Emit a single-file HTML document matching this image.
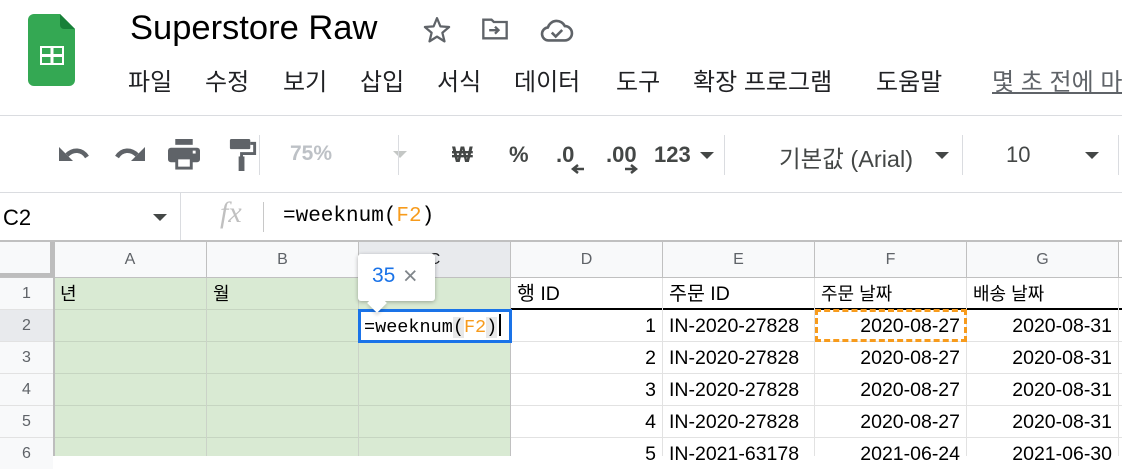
<!DOCTYPE html>
<html><head><meta charset="utf-8"><style>
*{margin:0;padding:0;box-sizing:border-box}
body{width:1122px;height:456px;overflow:hidden;background:#fff;font-family:"Liberation Sans","Noto Sans CJK KR",sans-serif;position:relative;color:#202124}
.a{position:absolute;white-space:nowrap}
.tb{color:#444746;font-size:22px;font-family:"Liberation Sans","Noto Sans CJK KR",sans-serif}
.sep{position:absolute;width:1px;background:#dadce0}
.vl{position:absolute;width:1px;background:#c0c0c0}
.hl{position:absolute;height:1px;background:#e2e2e2}
.ch{position:absolute;top:242px;height:35px;line-height:35px;text-align:center;font-size:16px;color:#5f6368;background:#f8f9fa}
.rh{position:absolute;left:0;width:53px;text-align:center;font-size:16px;color:#5f6368;background:#f8f9fa}
.c{position:absolute;font-size:19.5px;color:#000;height:31px;line-height:32px;padding:0 6px;overflow:hidden}
.r{text-align:right}
</style></head><body>
<svg class="a" style="left:28px;top:14px" width="48" height="72" viewBox="0 0 48 72">
<path d="M6 0H32L47 15V66a6 6 0 0 1-6 6H6a6 6 0 0 1-6-6V6a6 6 0 0 1 6-6z" fill="#34a853"/>
<path d="M32 0L47 15H36a4 4 0 0 1-4-4z" fill="#188038"/>
<rect x="12" y="32" width="24" height="19" fill="#fff"/>
<rect x="14" y="34" width="8.5" height="6" fill="#34a853"/><rect x="25.5" y="34" width="8.5" height="6" fill="#34a853"/>
<rect x="14" y="43" width="8.5" height="6" fill="#34a853"/><rect x="25.5" y="43" width="8.5" height="6" fill="#34a853"/>
</svg>
<div class="a" style="left:130px;top:9px;font-size:34.5px;color:#000">Superstore Raw</div>
<svg class="a" style="left:421px;top:15px" width="32" height="30" viewBox="0 0 24 24"><path d="M12 2.5l2.7 6.6 7 .5-5.4 4.6 1.7 6.9L12 17.3l-6 3.8 1.7-6.9L2.3 9.6l7-.5z" fill="none" stroke="#5f6368" stroke-width="1.8" stroke-linejoin="round"/></svg>
<svg class="a" style="left:481px;top:17px" width="28" height="24" viewBox="0 0 24 20"><path d="M2 2h7l2 2h11v14H2z" fill="none" stroke="#5f6368" stroke-width="2"/><path d="M7 11h8M12 8l3 3-3 3" fill="none" stroke="#5f6368" stroke-width="2"/></svg>
<svg class="a" style="left:540px;top:17px" width="34" height="26" viewBox="0 0 26 20"><path d="M7 18a5 5 0 0 1-1-10 7 7 0 0 1 13-1 5.5 5.5 0 0 1 0 11z" fill="none" stroke="#5f6368" stroke-width="2"/><path d="M9 12l3 3 5-5" fill="none" stroke="#5f6368" stroke-width="2"/></svg>
<div class="a" style="left:128px;top:62px;font-size:24px;color:#202124">
<span style="position:absolute;left:0">파일</span><span style="position:absolute;left:77px">수정</span><span style="position:absolute;left:155px">보기</span><span style="position:absolute;left:232px">삽입</span><span style="position:absolute;left:309px">서식</span><span style="position:absolute;left:386px">데이터</span><span style="position:absolute;left:488px">도구</span><span style="position:absolute;left:565px">확장 프로그램</span><span style="position:absolute;left:748px">도움말</span><span style="position:absolute;left:864px;color:#5f6368;text-decoration:underline">몇 초 전에 마</span>
</div>
<div class="a" style="left:0;top:115px;width:1122px;height:1px;background:#dadce0"></div>
<svg class="a" style="left:57px;top:143px" width="34" height="22" viewBox="0 0 34 22"><path d="M10 12c6-6 15-6 20 2" fill="none" stroke="#5f6368" stroke-width="4.5"/><path d="M2 4v14h14z" fill="#5f6368"/></svg>
<svg class="a" style="left:113px;top:143px" width="34" height="22" viewBox="0 0 34 22"><g transform="translate(34 0) scale(-1 1)"><path d="M10 12c6-6 15-6 20 2" fill="none" stroke="#5f6368" stroke-width="4.5"/><path d="M2 4v14h14z" fill="#5f6368"/></g></svg>
<svg class="a" style="left:166px;top:139px" width="36" height="32" viewBox="0 0 24 22"><rect x="6" y="0" width="12" height="4" fill="#5f6368"/><rect x="1" y="6" width="22" height="10" rx="2" fill="#5f6368"/><rect x="6" y="12" width="12" height="9" fill="#5f6368"/><rect x="8" y="14" width="8" height="5" fill="#fff"/><rect x="18" y="8" width="2" height="2" fill="#fff"/></svg>
<svg class="a" style="left:228px;top:139px" width="30" height="32" viewBox="0 0 20 22"><rect x="1" y="0" width="14" height="7" rx="1" fill="#5f6368"/><path d="M15 3h3v7h-9v3" fill="none" stroke="#5f6368" stroke-width="2"/><rect x="7" y="12" width="4" height="10" fill="#5f6368"/></svg>
<div class="sep" style="left:259px;top:135px;height:40px"></div>
<div class="a tb" style="left:290px;top:142px;color:#bdc1c6;font-weight:bold;font-size:21px">75%</div>
<div class="a" style="left:393px;top:151px;border:7px solid transparent;border-top:7px solid #c4c7c5;border-bottom:0"></div>
<div class="sep" style="left:398px;top:135px;height:40px"></div>
<div class="a tb" style="left:452px;top:142px;font-weight:bold">₩</div>
<div class="a tb" style="left:509px;top:142px;font-weight:bold">%</div>
<div class="a tb" style="left:556px;top:142px;font-weight:bold">.0</div>
<svg class="a" style="left:570px;top:163px" width="16" height="12"><path d="M14 6H4M8 2L3 6l5 4" stroke="#444746" stroke-width="2.5" fill="none"/></svg>
<div class="a tb" style="left:606px;top:142px;font-weight:bold">.00</div>
<svg class="a" style="left:623px;top:163px" width="16" height="12"><path d="M2 6h10M8 2l5 4-5 4" stroke="#444746" stroke-width="2.5" fill="none"/></svg>
<div class="a tb" style="left:654px;top:142px;font-weight:bold">123</div>
<div class="a" style="left:700px;top:152px;border:7px solid transparent;border-top:7px solid #444746;border-bottom:0"></div>
<div class="sep" style="left:724px;top:135px;height:40px"></div>
<div class="a tb" style="left:779px;top:140px;font-size:23.5px">기본값 (Arial)</div>
<div class="a" style="left:935px;top:152px;border:7px solid transparent;border-top:7px solid #444746;border-bottom:0"></div>
<div class="sep" style="left:962px;top:135px;height:40px"></div>
<div class="a tb" style="left:1006px;top:142px">10</div>
<div class="a" style="left:1085px;top:152px;border:7px solid transparent;border-top:7px solid #444746;border-bottom:0"></div>
<div class="sep" style="left:1118px;top:135px;height:40px"></div>
<div class="a" style="left:0;top:192px;width:1122px;height:1px;background:#dadce0"></div>
<div class="a" style="left:3px;top:205px;font-size:22px;color:#000">C2</div>
<div class="a" style="left:153px;top:214px;border:7px solid transparent;border-top:7px solid #444746;border-bottom:0"></div>
<div class="sep" style="left:180px;top:193px;height:47px"></div>
<div class="a" style="left:220px;top:196px;font-size:30px;font-style:italic;font-family:'Liberation Serif',serif;color:#c0c0c0">fx</div>
<div class="sep" style="left:263px;top:202px;height:30px;background:#c8c8c8"></div>
<div class="a" style="left:283px;top:205px;font-size:21px;font-family:'Liberation Mono',monospace;color:#000">=weeknum(<span style="color:#f79b1c">F2</span>)</div>
<div class="a" style="left:0;top:240px;width:1122px;height:2px;background:#c0c0c0"></div>
<div class="a" style="left:0;top:242px;width:1122px;height:214px;background:#fff"></div>
<div class="a" style="left:54px;top:278px;width:457px;height:178px;background:#d9ead3"></div>
<div class="a" style="left:0;top:242px;width:54px;height:36px;background:#f8f9fa"></div>
<div class="a" style="left:50px;top:242px;width:4px;height:36px;background:#bdbdbd"></div>
<div class="a" style="left:0;top:273px;width:54px;height:4px;background:#bdbdbd"></div>
<div class="ch" style="left:54px;width:152px">A</div>
<div class="ch" style="left:207px;width:151px">B</div>
<div class="ch" style="left:359px;width:151px;background:#e8eaed;color:#202124">C</div>
<div class="ch" style="left:511px;width:151px">D</div>
<div class="ch" style="left:663px;width:151px">E</div>
<div class="ch" style="left:815px;width:151px">F</div>
<div class="ch" style="left:967px;width:151px">G</div>
<div class="rh" style="top:278px;height:31px;line-height:32px">1</div>
<div class="rh" style="top:310px;height:31px;line-height:32px;background:#e8eaed">2</div>
<div class="rh" style="top:342px;height:31px;line-height:32px">3</div>
<div class="rh" style="top:374px;height:31px;line-height:32px">4</div>
<div class="rh" style="top:406px;height:31px;line-height:32px">5</div>
<div class="rh" style="top:438px;height:31px;line-height:32px">6</div>
<div class="a" style="left:0;top:277px;width:1122px;height:1px;background:#c0c0c0"></div>
<div class="hl" style="left:0;top:309px;width:1122px"></div>
<div class="hl" style="left:0;top:341px;width:1122px"></div>
<div class="hl" style="left:0;top:373px;width:1122px"></div>
<div class="hl" style="left:0;top:405px;width:1122px"></div>
<div class="hl" style="left:0;top:437px;width:1122px"></div>
<div class="hl" style="left:54px;top:309px;width:457px;background:#c6d5c1"></div>
<div class="hl" style="left:54px;top:341px;width:457px;background:#c6d5c1"></div>
<div class="hl" style="left:54px;top:373px;width:457px;background:#c6d5c1"></div>
<div class="hl" style="left:54px;top:405px;width:457px;background:#c6d5c1"></div>
<div class="hl" style="left:54px;top:437px;width:457px;background:#c6d5c1"></div>
<div class="a" style="left:511px;top:308px;width:611px;height:2px;background:#000"></div>
<div class="vl" style="left:53px;top:242px;height:214px;width:2px;background:#bdbdbd"></div>
<div class="vl" style="left:206px;top:242px;height:214px;background:#cbd3c8"></div>
<div class="vl" style="left:358px;top:242px;height:214px;background:#cbd3c8"></div>
<div class="vl" style="left:510px;top:242px;height:214px"></div>
<div class="vl" style="left:662px;top:242px;height:214px;background:#e2e2e2"></div>
<div class="vl" style="left:814px;top:242px;height:214px;background:#e2e2e2"></div>
<div class="vl" style="left:966px;top:242px;height:214px;background:#e2e2e2"></div>
<div class="vl" style="left:1118px;top:242px;height:214px;background:#e2e2e2"></div>
<div class="vl" style="left:206px;top:242px;height:36px"></div><div class="vl" style="left:358px;top:242px;height:36px"></div>
<div class="vl" style="left:662px;top:242px;height:36px"></div><div class="vl" style="left:814px;top:242px;height:36px"></div><div class="vl" style="left:966px;top:242px;height:36px"></div><div class="vl" style="left:1118px;top:242px;height:36px"></div>
<div class="c" style="left:54px;top:278px;font-size:18px">년</div>
<div class="c" style="left:207px;top:278px;font-size:18px">월</div>
<div class="c" style="left:511px;top:278px">행 ID</div>
<div class="c" style="left:663px;top:278px">주문 ID</div>
<div class="c" style="left:815px;top:278px;font-size:18px">주문 날짜</div>
<div class="c" style="left:967px;top:278px;font-size:18px">배송 날짜</div>
<div class="c r" style="left:511px;top:310px;width:151px">1</div>
<div class="c r" style="left:511px;top:342px;width:151px">2</div>
<div class="c r" style="left:511px;top:374px;width:151px">3</div>
<div class="c r" style="left:511px;top:406px;width:151px">4</div>
<div class="c r" style="left:511px;top:438px;width:151px">5</div>
<div class="c" style="left:663px;top:310px">IN-2020-27828</div>
<div class="c" style="left:663px;top:342px">IN-2020-27828</div>
<div class="c" style="left:663px;top:374px">IN-2020-27828</div>
<div class="c" style="left:663px;top:406px">IN-2020-27828</div>
<div class="c" style="left:663px;top:438px">IN-2021-63178</div>
<div class="c r" style="left:815px;top:310px;width:151px">2020-08-27</div>
<div class="c r" style="left:815px;top:342px;width:151px">2020-08-27</div>
<div class="c r" style="left:815px;top:374px;width:151px">2020-08-27</div>
<div class="c r" style="left:815px;top:406px;width:151px">2020-08-27</div>
<div class="c r" style="left:815px;top:438px;width:151px">2021-06-24</div>
<div class="c r" style="left:967px;top:310px;width:151px">2020-08-31</div>
<div class="c r" style="left:967px;top:342px;width:151px">2020-08-31</div>
<div class="c r" style="left:967px;top:374px;width:151px">2020-08-31</div>
<div class="c r" style="left:967px;top:406px;width:151px">2020-08-31</div>
<div class="c r" style="left:967px;top:438px;width:151px">2021-06-30</div>
<div class="a" style="left:815px;top:309px;width:152px;height:33px;border:3px dashed #f79b1c"></div>
<div class="a" style="left:358px;top:309px;width:154px;height:34px;border:3px solid #1a73e8;background:#fff"></div>
<div class="a" style="left:364px;top:314px;font-size:18.5px;font-family:'Liberation Mono',monospace;color:#000">=weeknum<span style="background:#e8e8e8">(</span><span style="color:#f79b1c">F2</span><span style="background:#e8e8e8">)</span><span style="display:inline-block;width:2px;height:22px;background:#000;vertical-align:-4px;margin-left:2px"></span></div>
<div class="a" style="left:358px;top:254px;width:77px;height:47px;background:#fff;border-radius:3px;box-shadow:0 1px 4px rgba(0,0,0,.3)"></div>
<div class="a" style="left:370px;top:296px;width:14px;height:14px;background:#fff;transform:rotate(45deg);box-shadow:2px 2px 3px rgba(0,0,0,.15)"></div>
<div class="a" style="left:358px;top:254px;width:77px;height:46px;background:#fff;border-radius:3px"></div>
<div class="a" style="left:372px;top:264px;font-size:21px;color:#1a73e8">35</div>
<div class="a" style="left:403px;top:262px;font-size:25px;color:#80868b">×</div>
</body></html>
